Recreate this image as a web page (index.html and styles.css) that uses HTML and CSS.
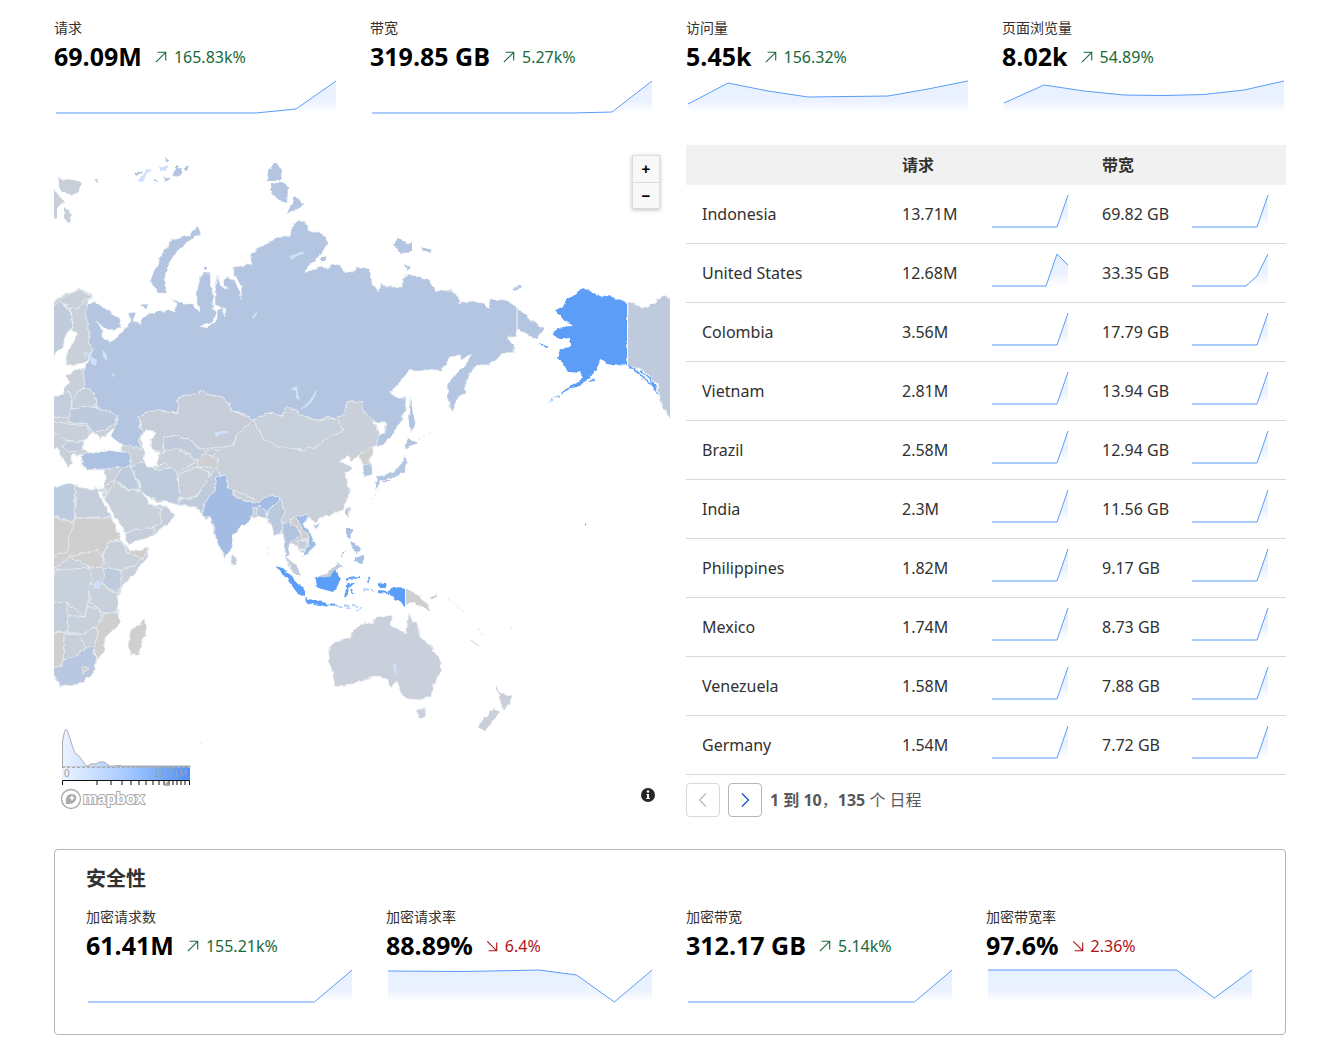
FILE: index.html
```html
<!DOCTYPE html>
<html lang="zh-CN">
<head>
<meta charset="utf-8">
<meta name="viewport" content="width=device-width, initial-scale=1">
<title>流量分析</title>
<link rel="stylesheet" href="styles.css">
</head>
<body>
<svg class="defs" aria-hidden="true">
  <defs>
    <linearGradient id="fade" x1="0" y1="0" x2="0" y2="36" gradientUnits="userSpaceOnUse">
      <stop offset="0" stop-color="#e6f0ff"/><stop offset=".6" stop-color="#ebf2ff"/><stop offset=".95" stop-color="#fff"/>
    </linearGradient>
    <symbol id="rise" viewBox="0 0 80 36">
      <path d="M67 34L78 2V34z" fill="url(#fade)"/>
      <path class="line" d="M2 34H67L78 2"/>
    </symbol>
    <symbol id="up" viewBox="0 0 14 14"><path d="M1 13L12.500 1.500M3 1.500H12.500V11" fill="none" stroke="currentColor" stroke-width="1.300"/></symbol>
    <symbol id="down" viewBox="0 0 14 14"><path d="M1.500 1.500L12 12M3 12.500H12.500V3" fill="none" stroke="currentColor" stroke-width="1.300"/></symbol>
  </defs>
</svg>
<main class="page">
  <section class="metrics">
    <article class="metric">
      <h3 class="label">请求</h3>
      <p class="reading"><strong>69.09M</strong><svg class="arrow up"><use href="#up"/></svg><span class="up">165.83k%</span></p>
      <svg class="chart" viewBox="0 0 284 36" preserveAspectRatio="none"><path d="M202 34L242 30L282 2V34z" fill="url(#fade)"/><path class="line" d="M2 34H202L242 30L282 2"/></svg>
    </article>
    <article class="metric">
      <h3 class="label">带宽</h3>
      <p class="reading"><strong>319.85 GB</strong><svg class="arrow up"><use href="#up"/></svg><span class="up">5.27k%</span></p>
      <svg class="chart" viewBox="0 0 284 36" preserveAspectRatio="none"><path d="M202 34L242 33L282 2V34z" fill="url(#fade)"/><path class="line" d="M2 34H202L242 33L282 2"/></svg>
    </article>
    <article class="metric">
      <h3 class="label">访问量</h3>
      <p class="reading"><strong>5.45k</strong><svg class="arrow up"><use href="#up"/></svg><span class="up">156.32%</span></p>
      <svg class="chart" viewBox="0 0 284 36" preserveAspectRatio="none"><path d="M2 25L42 4L82 12L122 18L202 17L242 10L282 2V34H2z" fill="url(#fade)"/><path class="line" d="M2 25L42 4L82 12L122 18L202 17L242 10L282 2"/></svg>
    </article>
    <article class="metric">
      <h3 class="label">页面浏览量</h3>
      <p class="reading"><strong>8.02k</strong><svg class="arrow up"><use href="#up"/></svg><span class="up">54.89%</span></p>
      <svg class="chart" viewBox="0 0 284 36" preserveAspectRatio="none"><path d="M2 24L42 6L82 12L122 16L162 16.500L202 15.500L242 11L282 2V34H2z" fill="url(#fade)"/><path class="line" d="M2 24L42 6L82 12L122 16L162 16.500L202 15.500L242 11L282 2"/></svg>
    </article>
  </section>

  <section class="traffic">
    <div class="map">
      <svg class="world" viewBox="54 145 616 672" role="img" aria-label="世界地图">
        <defs>
          <filter id="coast" x="54" y="145" width="616" height="672" filterUnits="userSpaceOnUse" color-interpolation-filters="sRGB">
            <feTurbulence type="fractalNoise" baseFrequency=".16" numOctaves="2" seed="4"/>
            <feDisplacementMap in="SourceGraphic" scale="5" xChannelSelector="R" yChannelSelector="G"/>
          </filter>
        </defs>
        <g filter="url(#coast)" stroke="#eef1f5" stroke-width=".8" stroke-linejoin="round">
          <!-- Eurasia -->
          <path fill="#c9d0da" d="M50 303L64 295L80 289L92 295L88 300L88 363L85 367L72 372L65 377L70 382L65 385L63 395L50 396V445L57 449L64 462L68 467L73 462L71 455L85 455L80 460L87 470L105 470L105 480L103 490L105 500L117 520L125 533L128 545L153 535L167 525L174 515L165 506L150 505L142 492L147 495L157 503L165 502L178 505L195 507L200 512L205 520L211 518L212 527L218 545L225 558L232 548L233 535L252 518L257 517L267 518L270 523L275 535L282 532L285 540L285 558L293 572L300 577L298 570L293 563L287 557L288 543L292 543L297 548L303 552V557L315 546L312 537L303 525L308 518L315 522L320 518L335 513L343 510L350 493L348 485L344 475L353 467L340 462L348 455L352 462L359 455L364 467L365 477L372 474V467L368 460L373 452V447L383 440L360 395L150 400z"/>
          <path fill="#c0cbdb" d="M50 305L62 302L70 310L73 330L67 332L62 347L50 360z"/>
          <path fill="#c9d0da" d="M71 309L80 305L84 300L89 310L89 340L93 350L85 364L65 365L67 352L77 335L73 330z"/>
          <path fill="#c8cfd9" d="M50 304L80 289L92 297L85 300L78 308L70 308L62 302L50 307z"/>
          <!-- Russia -->
          <path fill="#b3c5e0" d="M87 305L95 302L108 310L120 318L121 327L113 330L103 327L96 321L103 330V338L110 343L113 341L118 337V333L128 327L131 320L128 313L136 312L133 322L140 323L142 317L155 312L170 310L175 312L177 305L171 298L178 302L193 305L200 312L196 300V292L202 273H210L211 285L213 295V307L216 315L210 323L201 325L208 327L217 318V309L222 307L226 317L225 308L215 305V292L218 275L220 285L227 290L222 280L228 277L237 283L240 295L243 285L235 277L234 267L252 264L250 255L255 250L270 242L277 238L290 235L293 225L300 219L305 222L310 232H320L327 238V245L320 255L310 265L305 273L318 267L327 268L333 265L340 266L343 271L355 272L357 265L365 269H370L372 282L378 292L382 283L387 287H402V277L408 274L418 277L430 281L437 291L450 290L458 295L460 303L473 302L483 303L488 308L490 299L505 300L517 307L530 320L545 328L537 340L523 332L518 329L515 337H507L513 345V352L502 355L488 365H477L468 375L465 393L457 400L452 412L448 402L447 385L457 373L467 363L473 352L462 360L460 355L450 358L440 372L430 370H410L400 382L390 393L397 398H406L405 413L393 435L383 445L377 447V438L385 432L387 423H377L365 413L362 403L355 401L347 403L345 415L335 418L330 416L317 421L305 416L295 413L287 407L283 416L268 413L253 420L242 413L232 410L223 397L215 399L202 392L178 398V413H165L150 410L138 417L140 427L143 432L138 440L142 450L130 446L118 443L110 435L118 423L117 415L103 410L95 405L97 400L92 390L85 388L83 370L88 363L93 350L89 340V327L85 313z"/>
          <!-- Europe and western Asia -->
          <path fill="#c3cddb" d="M50 397L63 395L68 390L72 400L70 416L50 418z"/>
          <path fill="#c5cedb" d="M72 400L82 388L92 390L97 400L93 407L72 409z"/>
          <path fill="#bdc9dc" d="M71 409L95 406L103 410L117 415L118 423L105 430L93 432L88 424L68 422z"/>
          <path fill="#c9d0da" d="M50 420L68 424L88 426L92 440L78 442L65 440L50 430z"/>
          <path fill="#c2ccdb" d="M67 441L84 442L82 451L68 452L62 446z"/>
          <path fill="#adc2e2" d="M80 457L88 452L108 450L130 453L131 466L122 467L105 469L87 470z"/>
          <path fill="#bdcbdc" d="M122 467L131 467L139 485L139 491L128 489L115 480z"/>
          <path fill="#cdcfd2" d="M104 486L115 479L113 492L106 494z"/>
          <path fill="#c8d0da" d="M106 494L115 482L128 490L142 492L150 505L162 510L160 526L125 533L117 520L105 500z"/>
          <path fill="#c6cedb" d="M125 533L134 530L152 527L154 535L128 545z"/>
          <path fill="#c6cedb" d="M160 512L166 505L174 515L167 525L156 532L152 527L161 523z"/>
          <path fill="#bdcbdc" d="M131 467L142 462L158 470L176 467L180 490L180 505L165 502L150 497L140 491L139 482z"/>
          <path fill="#c6cdd9" d="M138 417L150 410L178 413V398L202 392L223 397L232 410L253 420L238 434L233 445L212 447L203 450L190 440L173 435L164 438V452L152 450L143 432z"/>
          <path fill="#c0cbdb" d="M164 438L173 435L190 440L205 453L212 449L222 450L205 460L193 458L180 448L165 452z"/>
          <path fill="#c9d0da" d="M158 455L175 448L190 456L195 463L178 472L165 464L158 467z"/>
          <path fill="#cdcfd1" d="M197 460L205 454L218 460L217 468L198 467z"/>
          <path fill="#c9d0d9" d="M178 475L196 467L210 472L205 485L196 497L180 500z"/>
          <path fill="#bfcada" d="M180 500L197 497L207 480L216 470L224 480L207 503L210 517L196 507L179 505z"/>
          <path fill="#c7d0db" d="M253 420L268 413L283 416L287 407L305 416L317 421L335 418L344 430L325 438L318 446L302 450L277 446L263 438z"/>
          <!-- South and southeast Asia -->
          <path fill="#a2bce4" d="M205 503L215 490L217 476L226 475L229 488L236 498L255 503L272 495L280 498L268 510L266 516L261 511L253 507L252 518L233 535L232 548L225 558L218 545L211 518L202 516z"/>
          <path fill="#c9d0d9" d="M233 490L254 499L253 503L236 498z"/>
          <path fill="#b7c7df" d="M257 506L264 509L267 518L257 517z"/>
          <path fill="#bbc9dc" d="M267 518L271 507L281 498L285 513L282 520L283 530L275 535z"/>
          <path fill="#b0c4e0" d="M282 522L290 523L298 529L300 535L290 541L288 556L285 558L285 538z"/>
          <path fill="#9cbbe8" d="M295 517L308 515L304 525L312 536L315 546L303 557L303 551L309 546L308 537L299 526z"/>
          <path fill="#cfcfcf" d="M289 519L295 517L301 526L308 536L308 543L303 540L298 528L291 526z"/>
          <path fill="#c4ceda" d="M297 541L307 540L306 549L299 550z"/>
          <path fill="#cfcfcf" d="M359 455L373 447L373 453L368 460L371 464L363 465z"/>
          <path fill="#b2c5e1" stroke="none" d="M363 466L371 464L372 474L365 477zM405 455L407 462L403 473L393 477L378 481L376 477L392 473L402 463zM408 437L417 443L405 449zM374 482L380 480L377 489zM410 397L413 413L415 420L411 433L409 413zM383 480H390L384 483z"/>
          <path fill="#c0cbdb" stroke="none" d="M291 562L297 565L301 577L294 572zM318 577L328 573L337 562L344 567L335 570L330 577zM346 509L350 507L349 517L346 514zM313 525L320 523L317 529zM232 554L237 560L234 565L231 562z"/>
          <path fill="#a8c0e4" stroke="none" d="M346 528L352 528L351 540L346 538zM355 558L363 555V564L355 561zM350 541L356 545L361 549L358 553L352 548zM340 557L345 550L344 554z"/>
          <!-- Africa -->
          <path fill="#c8d0da" d="M50 489L65 483L75 486L87 489L102 488L104 493L97 490L105 507L112 520L117 533L127 548L130 551L149 548L147 558L135 573L122 587L117 597L119 613L120 623L105 638L104 652L97 660L95 670L83 682L70 685L60 687L50 671z"/>
          <path fill="#bccbde" d="M50 489L65 483L75 486V523H72L50 515z"/>
          <path fill="#c6cedb" d="M75 486L87 489L102 488L104 493L97 490L112 518H75z"/>
          <path fill="#cfcfcf" d="M50 515L72 523L75 518H112L122 541L110 540L103 553L103 567L90 568L78 560L68 558L58 567L50 568z"/>
          <path fill="none" d="M75 518L68 540L70 557L98 550L103 558M68 550L50 558"/>
          <path fill="#cfcfcf" d="M122 541L130 551L149 548L143 559L128 553z"/>
          <path fill="#c8d0da" d="M102 558L110 540L122 542L128 553L142 558L132 567L113 571z"/>
          <path fill="#bdcbdd" d="M104 568L121 570V587L117 593L103 584z"/>
          <path fill="#c8d0dc" d="M90 585L103 585L117 595L118 613L102 613L90 602z"/>
          <path fill="#c8d0dc" d="M55 570L90 568L92 578L88 603L85 617L67 603L50 602z"/>
          <path fill="#cfcfcf" d="M102 614L119 613L120 623L105 638L104 652L97 660L94 648L98 630L90 625L103 620z"/>
          <path fill="#c4cedb" d="M50 602L67 603V615H70L68 632H50z"/>
          <path fill="#c8d0dc" d="M67 615L85 617L87 606L100 610V622L86 633H68z"/>
          <path fill="#cfcfcf" d="M50 633H68L64 645L63 666L50 668z"/>
          <path fill="#c7cfdb" d="M64 635L78 634L86 647L75 657L63 661z"/>
          <path fill="#b9c7e0" d="M50 668L63 666V660L75 657L85 647L93 647L96 660L95 670L83 682L70 685L60 687z"/>
          <path fill="#cfcfcf" d="M82 669L86 666L88 670L84 673zM145 617L147 627L138 655L130 655L128 643L131 630L140 625z"/>
          <!-- Inland seas -->
          <path fill="#fff" d="M84 450L85 441L93 432L100 438L106 437L108 432L114 429L111 437L122 445L122 452L108 450L92 453zM140 438L147 430L156 432L150 440L152 450L159 453L157 467H148L143 458L145 452z"/>
          <!-- Arctic islands -->
          <path fill="#b3c5e0" stroke="none" d="M277 162L282 171L280 181L267 181L268 170zM271 184L282 182L288 187L287 203L277 199L270 191zM295 195L304 205L287 214zM197 227L201 233L184 244L174 255L166 270L164 282L168 293L158 292L151 282L155 270L164 251L173 239L188 236zM397 238L406 243L412 242L412 251L400 254L394 245zM420 246L432 250L430 253L422 251zM404 264L412 267L408 270zM512 290L515 286L522 287L521 289zM173 170L181 168L181 175L173 177zM182 168L190 164L188 172zM133 173L143 170L137 176zM166 157L170 159L165 163zM164 178L171 178L166 182zM154 179H157V182H154zM176 166H179V169H176zM141 305L147 304L145 308zM203 267H207V270H203zM321 257H326V260H321z"/>
          <path fill="#cfe0fb" stroke="none" d="M138 180L148 170L151 169L144 181L139 182zM159 166L168 167L165 172L159 171z"/>
          <path fill="#c8cfd9" stroke="none" d="M57 178L65 181L69 178L81 182L80 187L73 196L60 190zM50 184L64 202L57 209V218L50 222zM64 206L72 214L68 223L64 218zM94 180L98 179L97 182z"/>
          <!-- Oceania -->
          <path fill="#c9d0dc" d="M330 647L335 642L350 638L353 631L365 622L373 624L375 618L382 615L393 617L390 625L405 633L407 627L409 613L413 622L417 623L420 637L428 643L435 653L440 658L441 668L438 677L433 687L431 697L420 700L412 699L403 697L400 688L397 682L391 687L387 678L377 676L357 683L340 687L333 686V673L328 660zM416 709H427L423 718L419 718z"/>
          <path fill="#c9d0d9" stroke="none" d="M496 686L502 694L512 697L509 704L503 711L501 703zM495 708L500 712L485 731L478 728L480 723z"/>
          <path fill="#cfcfcf" stroke="none" d="M406 589L420 595L431 611L420 606L410 603L406 606zM428 598L437 593L434 599z"/>
          <!-- Indonesia -->
          <path fill="#5c9df8" stroke="none" d="M275 566L283 568L305 590V597L298 594L287 579zM305 598L313 600L330 604L323 607L307 603zM315 577L330 577L335 570L341 578L337 587L333 592L318 588zM387 591L395 586L405 589V606L400 602L390 595zM377 583L385 584L386 588L380 588z"/>
          <path fill="none" stroke="#5c9df8" stroke-width="2" d="M347 580L350 578L359 577M349 583L347 590L345 597M349 587L353 583M351 589L353 594M368 577L369 582M378 592L388 593M330 604L336 606"/>
          <path fill="none" stroke="#5c9df8" stroke-dasharray="6 2" d="M336 606H360M356 611L361 607M345 609L349 609M363 591L374 590"/>
          <!-- North America -->
          <path fill="#bfcbdc" d="M627 302L635 304L642 308L648 307L657 300L665 295L675 302V424L663 408L660 398L657 385L643 370L627 366z"/>
          <path fill="#5c9df8" stroke="none" d="M627 302L612 297L595 294L583 288L575 295L567 298L563 307L555 310L562 318L572 326L563 327L552 332L557 338L570 338V345L560 350L557 358L563 363L568 372L582 373L580 380L571 388L577 387L590 378L598 367L600 360L607 363L618 365L627 366zM588 382L595 377L594 381z"/>
          <path fill="none" stroke="#5c9df8" stroke-width="1.500" d="M628 366L637 371L643 378L652 385L658 394M641 371L650 379L657 390M540 345L547 347M575 385L562 393M584 523L586 524"/>
          <path fill="none" stroke="#5c9df8" stroke-dasharray="4 2" d="M564 392L548 402"/>
        </g>
        <path d="M517 307V331M627.500 302V366M405.500 589V606" stroke="#f4f6f8" fill="none"/>
        <!-- Lakes -->
        <path fill="#cfe0fb" d="M90 356L97 360L96 366L91 364zM102 349L107 355V361L103 357zM111 371L115 376L113 377zM83 353L88 351L86 359zM316 389C318 396 309 408 299 410C307 405 313 397 316 389zM290 389L297 386L298 394L300 401L296 398L296 391zM289 256L296 254L303 251L304 254L297 256L292 260zM252 317L258 310L256 316L253 319zM239 294L243 300L240 299zM214 433L221 431L229 431V433L220 434L216 437zM93 583L100 580V589L94 588zM393 664H396V668L397 676L394 672z"/>
        <!-- Island chains -->
        <path fill="none" stroke="#e2e5ea" stroke-dasharray="3 3" d="M418 440L432 432M370 500L376 494M268 547V555M478 628L483 636M510 629L515 627M200 743L204 742M448 599L464 612"/>
        <path fill="none" stroke="#cfcfcf" d="M471 640L479 646"/>
      </svg>
      <div class="zoom"><button type="button" aria-label="放大">+</button><button type="button" aria-label="缩小">−</button></div>
      <div class="legend">
        <svg viewBox="0 0 130 58" width="130" height="58" role="img" aria-label="0 – 13.71M">
          <defs><linearGradient id="scale" x1="0" x2="128" y1="0" y2="0" gradientUnits="userSpaceOnUse"><stop offset="0" stop-color="#ebf3ff"/><stop offset=".5" stop-color="#a6caff"/><stop offset="1" stop-color="#4c93f8"/></linearGradient></defs>
          <path d="M0.500 38V12C2 4 3 0.500 4 0.500C7 1 10 22 15 26C19 27 22 37 26 37C29 34 31 35 34 35C38 32 43 32 46 36C50 39 55 35 60 37H128V38z" fill="url(#scale)" stroke="#aaa"/>
          <path d="M0 38H128V51H0z" fill="url(#scale)"/>
          <path d="M0 38.500H128" stroke="#aaa" stroke-dasharray="3 2"/>
          <path d="M0.500 56V51.500H127.500V56M35 52V56M49 52V56M60 52V56M69 52V56M77 52V56M84 52V56M91 52V56M97 52V56M102 52V56M107 52V56M111 52V56M115 52V56M119 52V56M123 52V56" fill="none" stroke="#111"/>
          <path d="M105 52L108 57H102z" fill="#aaa"/>
          <text class="scale-text" x="2" y="48">0</text><text class="scale-text" x="125" y="48" text-anchor="end">13.71M</text>
        </svg>
        <a class="logo" href="#" aria-label="mapbox"><svg width="88" height="24" viewBox="0 0 88 24">
          <circle cx="10" cy="12" r="9.500" fill="#fff" stroke="#aaa" stroke-width="1.300"/>
          <path d="M5 17C4 11 6 7 11 7C15 7 17 11 14 14C12 17 9 17 5 17z" fill="#aaa"/>
          <path d="M11 8L12 10L14 11L12 12L11 14L10 12L8 11L10 10z" fill="#fff"/>
          <text class="logo-text" x="22" y="17">mapbox</text></svg></a>
      </div>
      <button class="info" type="button" aria-label="信息"><svg width="14" height="14" viewBox="0 0 14 14"><circle cx="7" cy="7" r="7" fill="#262626"/><circle cx="7" cy="3.500" r="1.300" fill="#fff"/><path d="M5.500 6H8V10H9V11H5V10H6V7H5.500z" fill="#fff"/></svg></button>
    </div>

    <div class="countries">
      <table>
        <thead><tr><th scope="col" aria-label="国家"></th><th scope="col">请求</th><th scope="col">带宽</th></tr></thead>
        <tbody>
          <tr><td>Indonesia</td><td><div class="cell">13.71M<svg class="spark"><use href="#rise"/></svg></div></td><td><div class="cell">69.82 GB<svg class="spark"><use href="#rise"/></svg></div></td></tr>
          <tr><td>United States</td><td><div class="cell">12.68M<svg class="spark" viewBox="0 0 80 36"><path d="M56 34L67 2L78 13V34z" fill="url(#fade)"/><path class="line" d="M2 34H56L67 2L78 13"/></svg></div></td><td><div class="cell">33.35 GB<svg class="spark" viewBox="0 0 80 36"><path d="M56 34L67 24L78 2V34z" fill="url(#fade)"/><path class="line" d="M2 34H56L67 24L78 2"/></svg></div></td></tr>
          <tr><td>Colombia</td><td><div class="cell">3.56M<svg class="spark"><use href="#rise"/></svg></div></td><td><div class="cell">17.79 GB<svg class="spark"><use href="#rise"/></svg></div></td></tr>
          <tr><td>Vietnam</td><td><div class="cell">2.81M<svg class="spark"><use href="#rise"/></svg></div></td><td><div class="cell">13.94 GB<svg class="spark"><use href="#rise"/></svg></div></td></tr>
          <tr><td>Brazil</td><td><div class="cell">2.58M<svg class="spark"><use href="#rise"/></svg></div></td><td><div class="cell">12.94 GB<svg class="spark"><use href="#rise"/></svg></div></td></tr>
          <tr><td>India</td><td><div class="cell">2.3M<svg class="spark"><use href="#rise"/></svg></div></td><td><div class="cell">11.56 GB<svg class="spark"><use href="#rise"/></svg></div></td></tr>
          <tr><td>Philippines</td><td><div class="cell">1.82M<svg class="spark"><use href="#rise"/></svg></div></td><td><div class="cell">9.17 GB<svg class="spark"><use href="#rise"/></svg></div></td></tr>
          <tr><td>Mexico</td><td><div class="cell">1.74M<svg class="spark"><use href="#rise"/></svg></div></td><td><div class="cell">8.73 GB<svg class="spark"><use href="#rise"/></svg></div></td></tr>
          <tr><td>Venezuela</td><td><div class="cell">1.58M<svg class="spark"><use href="#rise"/></svg></div></td><td><div class="cell">7.88 GB<svg class="spark"><use href="#rise"/></svg></div></td></tr>
          <tr><td>Germany</td><td><div class="cell">1.54M<svg class="spark"><use href="#rise"/></svg></div></td><td><div class="cell">7.72 GB<svg class="spark"><use href="#rise"/></svg></div></td></tr>
        </tbody>
      </table>
      <nav class="pager" aria-label="分页">
        <button type="button" disabled aria-label="上一页"><svg width="16" height="16" viewBox="0 0 16 16"><path d="M11 1.500L4.500 8L11 14.500"/></svg></button>
        <button type="button" aria-label="下一页"><svg width="16" height="16" viewBox="0 0 16 16"><path d="M5 1.500L11.500 8L5 14.500"/></svg></button>
        <span><b>1 到 10</b>，<b>135</b> 个 日程</span>
      </nav>
    </div>
  </section>

  <section class="security">
    <h2>安全性</h2>
    <div class="metrics">
      <article class="metric">
        <h3 class="label">加密请求数</h3>
        <p class="reading"><strong>61.41M</strong><svg class="arrow up"><use href="#up"/></svg><span class="up">155.21k%</span></p>
        <svg class="chart" viewBox="0 0 284 36" preserveAspectRatio="none"><path d="M242 34L282 2V34z" fill="url(#fade)"/><path class="line" d="M2 34H242L282 2"/></svg>
      </article>
      <article class="metric">
        <h3 class="label">加密请求率</h3>
        <p class="reading"><strong>88.89%</strong><svg class="arrow down"><use href="#down"/></svg><span class="down">6.4%</span></p>
        <svg class="chart" viewBox="0 0 284 36" preserveAspectRatio="none"><path d="M2 3L82 3.500L162 2L202 7L242 34L282 2V34H2z" fill="url(#fade)"/><path class="line" d="M2 3L82 3.500L162 2L202 7L242 34L282 2"/></svg>
      </article>
      <article class="metric">
        <h3 class="label">加密带宽</h3>
        <p class="reading"><strong>312.17 GB</strong><svg class="arrow up"><use href="#up"/></svg><span class="up">5.14k%</span></p>
        <svg class="chart" viewBox="0 0 284 36" preserveAspectRatio="none"><path d="M242 34L282 2V34z" fill="url(#fade)"/><path class="line" d="M2 34H242L282 2"/></svg>
      </article>
      <article class="metric">
        <h3 class="label">加密带宽率</h3>
        <p class="reading"><strong>97.6%</strong><svg class="arrow down"><use href="#down"/></svg><span class="down">2.36%</span></p>
        <svg class="chart" viewBox="0 0 284 36" preserveAspectRatio="none"><path d="M2 2H202L242 30L282 2V34H2z" fill="url(#fade)"/><path class="line" d="M2 2H202L242 30L282 2"/></svg>
      </article>
    </div>
  </section>
</main>
</body>
</html>
```
FILE: styles.css
```css
* { box-sizing: border-box; }
body {
  margin: 0;
  background: #fff;
  color: #313131;
  font: 16px/24px "Noto Sans", "Noto Sans CJK SC", sans-serif;
}
h2, h3, p { margin: 0; }
button { padding: 0; font: inherit; cursor: pointer; }
.defs { position: absolute; width: 0; height: 0; }
.page { padding: 18px 43px 22px 54px; }

.metrics { display: grid; grid-template-columns: repeat(4, minmax(0, 1fr)); gap: 32px; }
.label { font-size: 14px; line-height: 20px; font-weight: 400; }
.reading { display: flex; align-items: center; height: 41px; padding-bottom: 3px; }
.reading strong { color: #000; font: 700 25px/34px "Open Sans", "Noto Sans", sans-serif; padding-bottom: 2px; }
.reading span { font-size: 16px; }
.arrow { width: 12px; height: 12px; margin: 0 7px 0 13px; }
.up { color: #19693b; }
.down { color: #b01217; }
.chart { display: block; width: 100%; height: 36px; }
.line { fill: none; stroke: #5b9cf8; stroke-width: 1px; vector-effect: non-scaling-stroke; }

.traffic { display: grid; grid-template-columns: repeat(2, minmax(0, 1fr)); gap: 32px; margin: 30px 0 32px; }
.map { position: relative; margin-right: -16px; }
.world { display: block; width: 100%; height: auto; }
.zoom {
  position: absolute; top: 10px; right: 10px; width: 28px;
  border: 1px solid #ddd; background: #f8f8f8; box-shadow: 0 1px 4px rgba(0, 0, 0, .25);
}
.zoom button {
  display: block; width: 100%; height: 26px; border: 0; background: none;
  color: #000; font: 700 15px/26px "Liberation Sans", sans-serif;
}
.zoom button + button { border-top: 1px solid #ddd; }
.legend { position: absolute; left: 8px; bottom: 6px; }
.legend svg { display: block; }
.scale-text { fill: #9a9fa8; font: 10px "Liberation Sans", sans-serif; }
.logo { display: block; margin-left: -1px; }
.logo-text { fill: #fff; stroke: #aaa; stroke-width: 2px; paint-order: stroke; font: 700 16px "Liberation Sans", sans-serif; }
.info { position: absolute; right: 15px; bottom: 15px; width: 14px; height: 14px; border: 0; background: none; }
.info svg { display: block; }

table { width: 100%; border-collapse: collapse; table-layout: fixed; }
th { height: 40px; padding: 0 16px; background: #f1f1f1; text-align: left; font-weight: 700; }
td { padding: 8px 16px; border-bottom: 1px solid #d9d9d9; line-height: 42px; }
.cell { display: flex; justify-content: space-between; align-items: flex-start; white-space: nowrap; }
.spark { flex: none; width: 80px; height: 36px; }
.pager { display: flex; align-items: center; gap: 8px; margin-top: 8px; color: #595959; }
.pager button {
  display: grid; place-items: center; width: 34px; height: 34px;
  border: 1px solid #b6b6b6; border-radius: 4px; background: #fff; color: #0051c3;
}
.pager button:disabled { border-color: #d9d9d9; color: #b6b6b6; }
.pager path { fill: none; stroke: currentColor; stroke-width: 1.2; }

.security { padding: 15px 31px 30px; border: 1px solid #b6b6b6; border-radius: 4px; }
.security h2 { margin-bottom: 14px; font-size: 20px; line-height: 28px; }
```
